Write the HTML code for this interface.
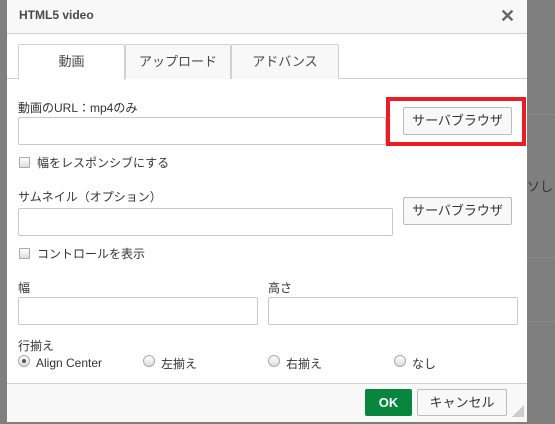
<!DOCTYPE html>
<html><head><meta charset="utf-8"><style>
*{box-sizing:border-box;margin:0;padding:0}
body{width:555px;height:424px;background:#7f7f7f;position:relative;overflow:hidden;font-family:"Liberation Sans","Noto Sans CJK JP",sans-serif;font-size:12px;color:#333}
.a{position:absolute}
.dlg{left:7px;top:0;width:520px;height:422px;background:#fff}
.hdr{left:7px;top:0;width:520px;height:34px;background:#f8f8f8;border-bottom:1px solid #d1d1d1}
.tab{position:absolute;top:44px;height:35px;border:1px solid #d1d1d1;border-bottom:none;background:#f8f8f8;text-align:center;line-height:33px;font-size:13px;color:#484848;border-radius:2px 2px 0 0}
.in{position:absolute;border:1px solid #c9c9c9;border-radius:2px;background:#fff}
.btn{position:absolute;border:1px solid #bcbcbc;border-radius:2px;background:#f8f8f8;text-align:center;font-size:13px;color:#333}
.cb{position:absolute;width:11px;height:11px;border:1px solid #aaa;background:linear-gradient(#fff,#ddd);border-radius:1px}
.rd{position:absolute;width:12px;height:12px;border:1px solid #aaa;border-radius:50%;background:linear-gradient(#fff,#ddd)}
.t{position:absolute;font-size:12px;color:#333;white-space:nowrap}
</style></head><body>
<div class="a" style="left:527px;top:114px;width:28px;height:1px;background:#888"></div>
<div class="a" style="left:527px;top:257px;width:28px;height:1px;background:#888"></div>
<div class="a" style="left:527px;top:321px;width:28px;height:1px;background:#888"></div>
<div class="a" style="left:527px;top:176px;color:#333;font-size:13px;white-space:nowrap">ソしま</div>
<div class="a dlg"></div>
<div class="a hdr"></div>
<div class="t" style="left:19px;top:8px;font-weight:bold;color:#484848;font-size:12px">HTML5 video</div>
<div class="t" style="left:500px;top:6px;font-size:18px;font-weight:bold;color:#666">✕</div>
<div class="a" style="left:7px;top:78px;width:520px;height:1px;background:#d1d1d1"></div>
<div class="tab" style="left:18px;width:107px;background:#fff;height:36px">動画</div>
<div class="tab" style="left:125px;width:106px">アップロード</div>
<div class="tab" style="left:231px;width:108px">アドバンス</div>
<div class="t" style="left:18px;top:99px">動画のURL：mp4のみ</div>
<div class="in" style="left:18px;top:117px;width:368px;height:28px"></div>
<div class="btn" style="left:403px;top:107px;width:109px;height:28px;line-height:26px">サーバブラウザ</div>
<div class="a" style="left:386px;top:97px;width:140px;height:49px;border:4px solid #ed1c24"></div>
<div class="cb" style="left:19px;top:157px"></div>
<div class="t" style="left:37px;top:154px">幅をレスポンシブにする</div>
<div class="t" style="left:18px;top:188px">サムネイル（オプション）</div>
<div class="in" style="left:18px;top:208px;width:375px;height:28px"></div>
<div class="btn" style="left:403px;top:197px;width:109px;height:28px;line-height:26px">サーバブラウザ</div>
<div class="cb" style="left:19px;top:248px"></div>
<div class="t" style="left:37px;top:245px">コントロールを表示</div>
<div class="t" style="left:18px;top:279px">幅</div>
<div class="t" style="left:268px;top:279px">高さ</div>
<div class="in" style="left:18px;top:297px;width:240px;height:28px"></div>
<div class="in" style="left:268px;top:297px;width:250px;height:28px"></div>
<div class="t" style="left:18px;top:337px">行揃え</div>
<div class="rd" style="left:18px;top:355px"><div style="width:4px;height:4px;background:#555;border-radius:50%;margin:3px"></div></div>
<div class="t" style="left:36px;top:356px">Align Center</div>
<div class="rd" style="left:143px;top:355px"></div>
<div class="t" style="left:161px;top:355px">左揃え</div>
<div class="rd" style="left:268px;top:355px"></div>
<div class="t" style="left:286px;top:355px">右揃え</div>
<div class="rd" style="left:394px;top:355px"></div>
<div class="t" style="left:412px;top:355px">なし</div>
<div class="a" style="left:7px;top:383px;width:520px;height:39px;background:#f8f8f8;border-top:1px solid #d1d1d1"></div>
<div class="a" style="left:365px;top:389px;width:47px;height:27px;background:#09863e;border-radius:2px;color:#fff;font-weight:bold;font-size:13px;text-align:center;line-height:27px">OK</div>
<div class="btn" style="left:417px;top:389px;width:90px;height:27px;line-height:25px;background:#f8f8f8">キャンセル</div>
<svg class="a" style="left:512px;top:405px" width="12" height="12"><path d="M12 0L12 12L0 12Z" fill="#ccc"/></svg>
</body></html>
